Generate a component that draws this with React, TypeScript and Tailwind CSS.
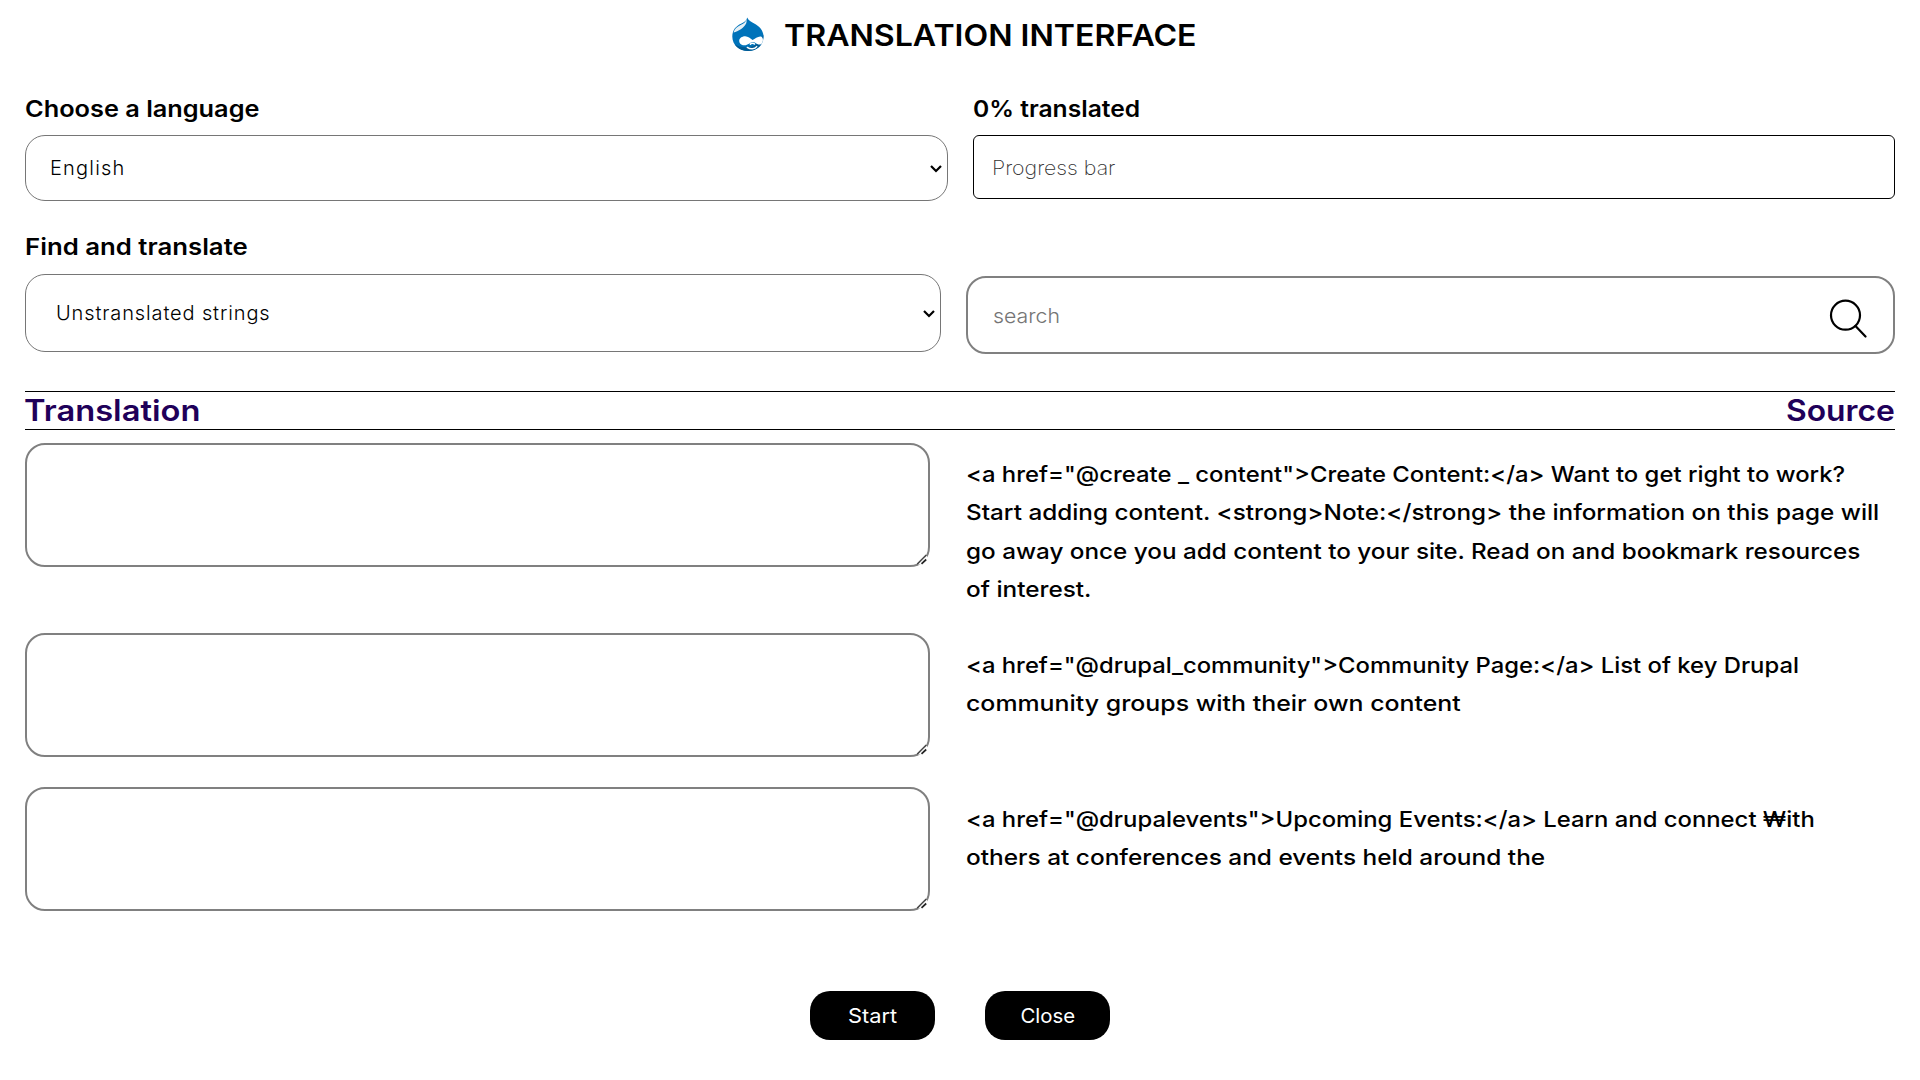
import React from "react";

type Line = { text: string; stretch: string };

const entries: { rowClass: string; padClass: string; lines: Line[] }[] = [
  {
    rowClass: "h-[190px]",
    padClass: "pt-[12px]",
    lines: [
      { text: '<a href="@create _ content">Create Content:</a> Want to get right to work?', stretch: "scale-x-[1.085]" },
      { text: "Start adding content. <strong>Note:</strong> the information on this page will", stretch: "scale-x-[1.104]" },
      { text: "go away once you add content to your site. Read on and bookmark resources", stretch: "scale-x-[1.103]" },
      { text: "of interest.", stretch: "scale-x-[1.105]" },
    ],
  },
  {
    rowClass: "h-[154px]",
    padClass: "pt-[12.500px]",
    lines: [
      { text: '<a href="@drupal_community">Community Page:</a> List of key Drupal', stretch: "scale-x-[1.083]" },
      { text: "community groups with their own content", stretch: "scale-x-[1.131]" },
    ],
  },
  {
    rowClass: "h-[124px]",
    padClass: "pt-[12.500px]",
    lines: [
      { text: '<a href="@drupalevents">Upcoming Events:</a> Learn and connect ₩ith', stretch: "scale-x-[1.084]" },
      { text: "others at conferences and events held around the", stretch: "scale-x-[1.109]" },
    ],
  },
];

function DrupalLogo() {
  return (
    <svg width="32" height="35" viewBox="0 0 32 35" className="-mt-[2px] shrink-0">
      <path d="M15.2.5c1.2 3 4 4.400 7 6 4.800 2.700 9.300 6.500 9.300 13.300C31.500 28.700 24.600 34 16 34S.3 28.200.3 19.600C.3 12.800 4.400 8.800 9 6.800c3.400-1.600 5.500-3 6.200-6.300z" fill="#0073ba" />
      <path d="M31.400 17.500C31.800 28 25 34 16 34c-6 0-10.600-2.400-13.400-6.700C8 31 17 31.500 23 28c4.500-2.600 7-6 8.400-10.500z" fill="#005a93" />
      <path d="M14.400 2.500c-1 3-3 4.300-5.800 5.500C5 9.700 2.400 12 1.600 15.500c4.600-1.200 10.600-4.700 12.500-9 .6-1.300.6-2.700.3-4z" fill="#e6f0f6" />
      <path d="M13.200 19.200c3 0 5 2.300 7.400 3.900 2.400-1.300 5.400-3.800 8-3.500 2.800.4 2.900 4.500 1.500 6.600-1.500 2.300-4.800 1.300-6.900-.5-1.400-1-3.200-1-4.600 0-2.300 1.700-5 2.900-7.700 2.500-2.400-.4-4-2.400-3.700-4.900.3-2.500 3.200-4.100 6-4.100z" fill="#fff" />
      <path d="M18.300 27.200c.8-1 3.200-1.300 4.200-.2M15.300 30.400c3 2 7.500 1.900 9.400-.8" fill="none" stroke="#fff" strokeWidth="1.400" strokeLinecap="round" />
    </svg>
  );
}

function SearchIcon() {
  return (
    <svg width="38" height="39" viewBox="0 0 38 39" fill="none" stroke="#000" strokeWidth="2.200" strokeLinecap="round">
      <circle cx="16.500" cy="16.200" r="14.500" />
      <path d="M26.500 27l10 10.500" />
    </svg>
  );
}

function Chevron() {
  return (
    <svg
      width="12"
      height="8"
      viewBox="0 0 12 8"
      fill="none"
      stroke="#000"
      strokeWidth="2.200"
      className="pointer-events-none absolute top-1/2 right-[6px] -mt-[3px]"
    >
      <path d="M1 1l5 5 5-5" />
    </svg>
  );
}

function ResizeGrip() {
  return (
    <svg width="12" height="12" viewBox="0 0 12 12" fill="none" className="pointer-events-none absolute right-[2px] bottom-[2px]">
      <path d="M2 11.500L11 2.500v8l-1.500 1z" fill="#fff" />
      <path d="M1.200 11L10.200 2" stroke="#444" strokeWidth="1.300" />
      <path d="M5.500 10.800L10.200 6.500" stroke="#222" strokeWidth="1.700" />
    </svg>
  );
}

export default function App() {
  return (
    <main className="flex h-[1080px] w-[1920px] flex-col overflow-hidden bg-white px-[25px] pt-[15px] font-['Inter',sans-serif] text-black">
      <header className="flex h-10 items-center pl-[707px]">
        <DrupalLogo />
        <h1 className="ml-[20px] origin-left scale-x-[1.088] text-[29.500px] leading-10 font-semibold whitespace-nowrap">TRANSLATION INTERFACE</h1>
      </header>

      <section className="mt-10 flex gap-[25px]">
        <div className="flex w-[923px] flex-col items-start gap-3">
          <label className="origin-left scale-x-[1.125] text-[22.500px] leading-7 font-semibold">Choose a language</label>
          <div className="relative w-full">
            <select className="block h-[66px] w-full appearance-none rounded-[20px] border border-[#767676] bg-white px-[24px] text-[20px] font-light tracking-[1.2px]">
              <option>English</option>
            </select>
            <Chevron />
          </div>
        </div>
        <div className="flex w-[922px] flex-col items-start gap-3">
          <label className="origin-left scale-x-[1.095] text-[22.500px] leading-7 font-semibold">0% translated</label>
          <div className="flex h-16 w-full items-center rounded-md border border-black pt-[2px] pl-[18px] text-[20px] font-extralight text-[#333]">
            <span className="origin-left scale-x-[1.065]">Progress bar</span>
          </div>
        </div>
      </section>

      <section className="mt-8">
        <label className="block w-fit origin-left scale-x-[1.145] text-[22.500px] leading-7 font-semibold">Find and translate</label>
        <div className="mt-[13px] flex items-start gap-[25px]">
          <div className="relative w-[916px]">
            <select className="block h-[78px] w-full appearance-none rounded-[20px] border border-[#767676] bg-white px-[30px] text-[20px] font-light tracking-[0.87px]">
              <option>Unstranslated strings</option>
            </select>
            <Chevron />
          </div>
          <div className="mt-[2px] flex h-[78px] w-[929px] items-center justify-between rounded-[20px] border-2 border-[#808080] pr-[26px] pl-[25px]">
            <input
              placeholder="search"
              className="w-[600px] origin-left scale-x-[1.065] pt-[2px] text-[20px] font-light outline-none placeholder:text-[#757575]"
            />
            <div className="pt-[6px]">
              <SearchIcon />
            </div>
          </div>
        </div>
      </section>

      <section className="mt-[37px] flex h-[39px] items-center justify-between border-y border-black text-[29.500px] leading-[37px] font-semibold text-[#1f0059]">
        <h2 className="-ml-px origin-left scale-x-[1.108]">Translation</h2>
        <h2 className="origin-right scale-x-[1.079]">Source</h2>
      </section>

      <section className="mt-[13px] flex flex-col">
        {entries.map((entry) => (
          <div key={entry.lines[0].text} className={`flex items-start gap-[36px] ${entry.rowClass}`}>
            <div className="relative w-[905px] shrink-0">
              <textarea className="block h-[124px] w-full resize-none rounded-[20px] border-2 border-[#808080]" />
              <ResizeGrip />
            </div>
            <p className={`flex flex-col items-start text-[22px] leading-[38.250px] font-medium whitespace-nowrap ${entry.padClass}`}>
              {entry.lines.map((line) => (
                <span key={line.text} className={`block origin-left ${line.stretch}`}>
                  {line.text}
                </span>
              ))}
            </p>
          </div>
        ))}
      </section>

      <footer className="mt-20 flex justify-center gap-[50px]">
        <button className="flex h-[49px] w-[125px] items-center justify-center rounded-[20px] bg-black pt-px text-[20px] text-white">
          <span className="scale-x-[1.09]">Start</span>
        </button>
        <button className="flex h-[49px] w-[125px] items-center justify-center rounded-[20px] bg-black pt-px text-[20px] text-white">
          <span className="scale-x-[1.02]">Close</span>
        </button>
      </footer>
    </main>
  );
}
